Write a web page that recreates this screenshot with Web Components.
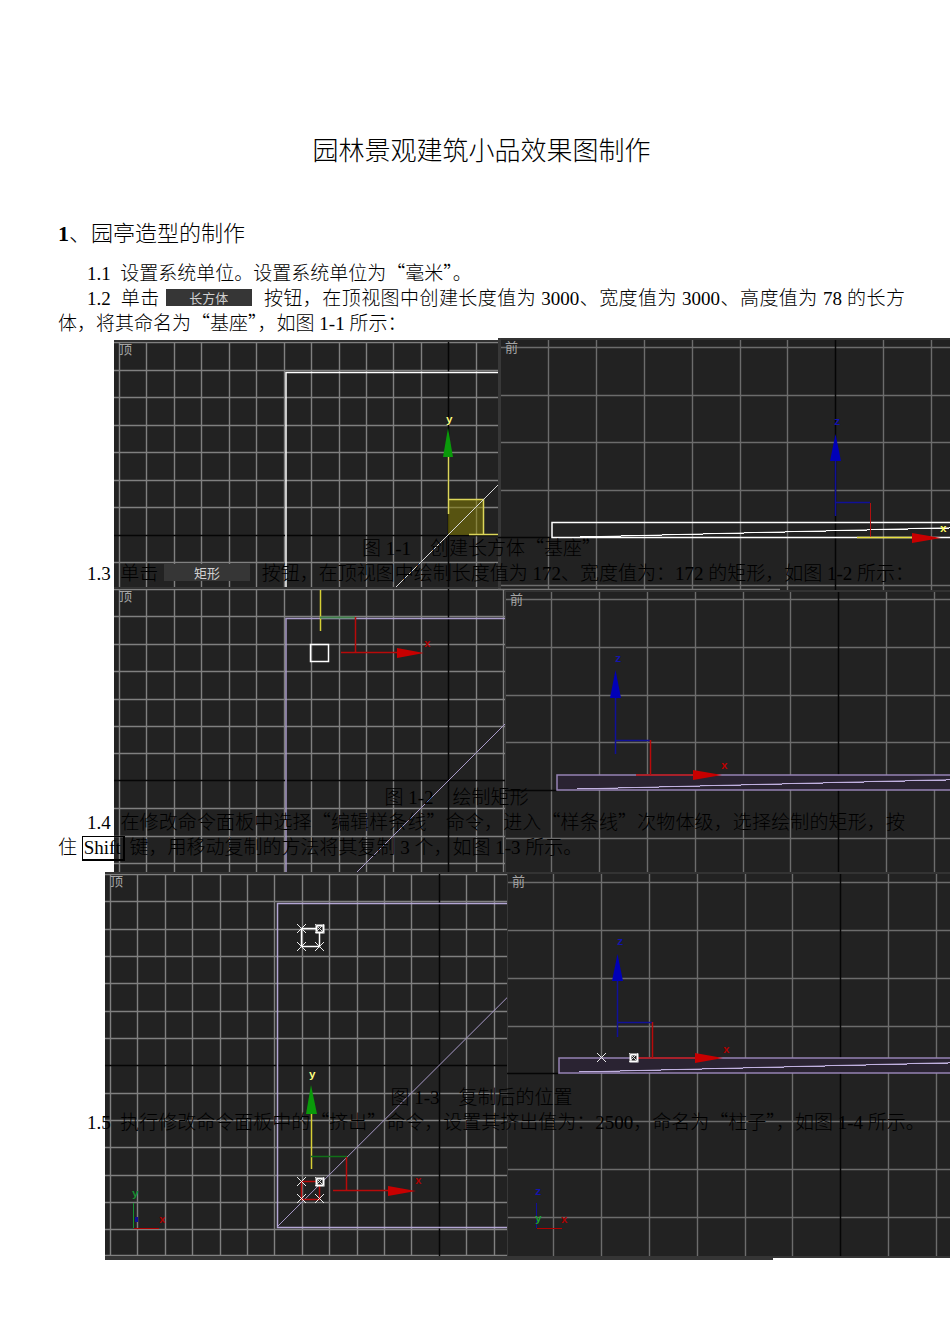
<!DOCTYPE html>
<html lang="zh-CN">
<head>
<meta charset="utf-8">
<title>园林景观建筑小品效果图制作</title>
<style>
html, body { margin: 0; background: #fff; color: #000; }
body { font: 19px/25px "Liberation Serif", "Noto Sans CJK SC", serif; font-weight: 300; }
</style>
</head>
<body>
<tutorial-page></tutorial-page>

<script>
const range = (start, step, end) => {
  const out = [];
  for (let v = start; v < end; v += step) out.push(Math.round(v));
  return out;
};
const cross = (x, y, c = '#eee') => `<path d="M${x - 4} ${y - 4}l9 9m0-9l-9 9" stroke="${c}"/>`;
const boxed = (x, y) => `<rect x="${x - 3}.5" y="${y - 3}.5" width="7" height="7" fill="#222" stroke="#fff" stroke-width="2"/><path d="M${x - 4} ${y - 4}l9 9m0-9l-9 9" stroke="#ddd"/>`;
const label = (x, y, t, c) => `<text x="${x}" y="${y}" fill="${c}" class="axis">${t}</text>`;
const slope = (x, y, c) => `<path d="M${x} ${y}l41 0m0-1l41 0m0-1l41 0m0-1l41 0m0-1l41 0m0-1l41 0m0-1l41 0m0-1l41 0m0-1l41 0m0-1l41 0" stroke="${c}"/><path d="M${x + 20} ${y}L${x + 370} ${y - 9}" stroke="${c}" opacity=".6"/>`;

/* Each scene uses the coordinates of the sheet; x and y give its top left corner. */
const SCENES = {
  top1: { x: 114, y: 340, w: 384, h: 247, label: '顶', lx: 119, ly: 354,
    cols: range(119, 27.45, 2000), rows: range(342, 27.5, 587), axisX: 448, axisY: 535, grid: '#808080',
    draw: `<path d="M286 600V372.5H2400" stroke="#fff" stroke-width="1.5"/>
      <rect x="448" y="499" width="36" height="36" fill="#8c8400" opacity=".5"/>
      <path d="M448.500 499.500H483.500V534M448.500 457V514M469 534.500H498" stroke="#dcd65a" stroke-width="1.5"/>
      <path d="M396 587L598 385" stroke="#d8d8d8"/>
      <path d="M448 428L453 457H443Z" fill="#0a9a0a" stroke="none"/>` + label(446, 423, 'y', '#ffff80') },
  front1: { x: 498, y: 338, w: 452, h: 252, label: '前', lx: 505, ly: 352, edge: 3,
    cols: range(548, 47.9, 2400), rows: range(347, 47.6, 588), axisX: 835, axisY: 537, axisEnd: 552, grid: '#6c6c6c',
    draw: `<path d="M2400 537.500H552V522.500H2400" stroke="#fff" stroke-width="1.5"/>` + slope(580, 536.5, '#fff') +
      `<path d="M498 589.500H780" stroke="#777" stroke-width="1.5"/>
      <path d="M835.500 458V516M835.500 502.500H870" stroke="#101098" stroke-width="1.500"/>
      <path d="M835.500 434L841 461H830Z" fill="#0000b8" stroke="none"/>
      <path d="M870.500 503V537" stroke="#b01010"/><path d="M857 537.500H912" stroke="#e8e040" stroke-width="1.500"/>
      <path d="M941 538L912 543V533Z" fill="#c80000" stroke="none"/>` + label(834, 425, 'z', '#1414b0') + label(940, 532, 'x', '#ffff60') },
  top2: { x: 114, y: 587, w: 391, h: 285, label: '顶', lx: 119, ly: 601,
    cols: range(119, 27.45, 2000), rows: range(589, 27.4, 872), axisX: 448, axisY: 780, grid: '#808080',
    draw: `<path d="M286 872V618.500H2400" stroke="#a99bc9" stroke-width="1.500"/><path d="M357 872L605 624" stroke="#a99bc9"/>
      <path d="M320.500 590V631" stroke="#d6cf35" stroke-width="1.500"/><path d="M320 617.500H355" stroke="#40804a" stroke-width="2"/>
      <path d="M355.500 617V652.500M341 652.500H398" stroke="#b80a0a" stroke-width="1.5"/><path d="M424 653L397 658V648Z" fill="#c80000" stroke="none"/>
      <rect x="310.500" y="644.500" width="18" height="17" stroke="#fff" stroke-width="1.500"/>` + label(424, 647, 'x', '#b00000') },
  front2: { x: 505, y: 590, w: 445, h: 282, label: '前', lx: 510, ly: 604, edge: 1,
    cols: range(551, 47.9, 2400), rows: range(599, 47.75, 872), axisX: 838, axisY: 790, axisEnd: 557, grid: '#6c6c6c',
    draw: `<path d="M2400 790H557V775H2400Z" fill="#2a2332" stroke="#9583b4" stroke-width="1.500"/>` + slope(577, 788.5, '#c0b0df') +
      `<path d="M615.500 696V754M615.500 740.500H650" stroke="#101098" stroke-width="1.500"/>
      <path d="M615.500 670L621 698H610Z" fill="#0000b8" stroke="none"/>
      <path d="M650.500 740V775M636 775H694" stroke="#b80a0a" stroke-width="1.5"/>
      <path d="M722 775L693 780V770Z" fill="#c80000" stroke="none"/>` + label(615, 662, 'z', '#1414b0') + label(721, 769, 'x', '#c00000') },
  top3: { x: 105, y: 872, w: 402, h: 388, label: '顶', lx: 110, ly: 886, floor: 1256,
    cols: range(110, 27.4, 2000), rows: range(874, 27.33, 1240).concat(1255), axisX: 439, axisY: 1065, grid: '#808080',
    draw: `<path d="M2400 903.500H277.500V1227.500H2400" stroke="#b3a6d4" stroke-width="1.500"/><path d="M277 1227L607 898" stroke="#a99bc9"/>
      <rect x="301.500" y="928.500" width="18" height="18" stroke="#fff" stroke-width="1.500"/>
      <path d="M311.500 1112V1169" stroke="#d6cf35" stroke-width="1.500"/><path d="M311 1085L317 1114H306Z" fill="#0a9a0a" stroke="none"/>
      <path d="M311 1156.500H347" stroke="#107018" stroke-width="1.5"/><path d="M346.500 1157V1190M333 1190.500H390M301.500 1181.500H319.500V1199.500H301.500Z" stroke="#b80a0a" stroke-width="1.5"/>
      <path d="M416 1191L388 1196V1186Z" fill="#c80000" stroke="none"/>` +
      cross(301, 928) + cross(301, 946) + cross(319, 946) + boxed(319, 928) +
      cross(301, 1181) + cross(301, 1198) + cross(319, 1198) + boxed(319, 1181) +
      `<path d="M133.500 1203V1228" stroke="#159030"/><path d="M134 1228.500H159" stroke="#b00000"/><rect x="135" y="1217" width="3" height="5" fill="#101098" stroke="none"/>` +
      label(309, 1078, 'y', '#ffff80') + label(415, 1184, 'x', '#b00000') + label(132, 1197, 'y', '#159030') + label(159, 1223, 'x', '#b00000') },
  front3: { x: 507, y: 872, w: 443, h: 388, label: '前', lx: 512, ly: 886, edge: 1, floor: 1256,
    cols: range(553, 47.9, 2400), rows: range(882, 47.85, 1240), axisX: 840, axisY: 1073, axisEnd: 558, grid: '#6c6c6c',
    draw: `<path d="M2400 1073H559V1058H2400Z" fill="#2a2332" stroke="#9583b4" stroke-width="1.500"/>` + slope(579, 1071.5, '#c0b0df') +
      `<path d="M617.500 980V1037M617.500 1022.500H652" stroke="#101098" stroke-width="1.500"/>
      <path d="M617.500 954L623 981H612Z" fill="#0000b8" stroke="none"/>
      <path d="M652.500 1022V1058M638 1058H696" stroke="#b80a0a" stroke-width="1.5"/>
      <path d="M723 1058L695 1063V1053Z" fill="#c80000" stroke="none"/>` + cross(601, 1057) + boxed(633, 1057) +
      `<path d="M536.500 1203V1228" stroke="#101098"/><path d="M537 1228.500H562" stroke="#b00000"/>
      <rect x="773" y="1258" width="1627" height="2" fill="#ffffff" stroke="none"/>` +
      label(617, 945, 'z', '#1414b0') + label(723, 1053, 'x', '#b00000') + label(535, 1195, 'z', '#1414b0') + label(535, 1222, 'y', '#20a030') + label(561, 1223, 'x', '#b00000') },
};

class ModelViewport extends HTMLElement {
  connectedCallback() {
    const s = SCENES[this.getAttribute('scene')];
    const end = s.floor || s.y + s.h;
    const v = s.cols.filter(x => Math.abs(x - s.axisX) > 3).map(x => `M${x}.5 ${s.y + 2}V${end}`).join('');
    const h = s.rows.filter(y => Math.abs(y - s.axisY) > 3).map(y => `M${s.x + (s.edge || 0)} ${y}.5H2400`).join('');
    this.attachShadow({ mode: 'open' }).innerHTML = `
      <style>
        :host { display: block; overflow: hidden; min-width: 0; }
        svg { display: block; width: 100%; height: ${s.h}px; background: #222; }
        path, rect { fill: none; }
        text { font: 13px "Noto Sans CJK SC", sans-serif; fill: #a5a5a5; }
        .axis { font: bold 11px "Liberation Mono", monospace; }
      </style>
      <svg role="img" aria-label="${s.label}视图"><g transform="translate(${-s.x} ${-s.y})">
        <path d="${v}${h}" stroke="${s.grid}" stroke-width="1.4"/>
        <path d="M${s.x} ${s.y}.5H2400" stroke="#333" stroke-width="3"/>
        ${s.edge ? `<path d="M${s.x + s.edge / 2} ${s.y}V${end}" stroke="#383838" stroke-width="${s.edge}"/>` : ''}
        <path d="M${s.axisX}.5 ${s.y + 2}V${end}" stroke="#050505" stroke-width="1.5"/>
        <path d="M${s.x} ${s.axisY}.5H${s.axisEnd || 2400}" stroke="#050505" stroke-width="1.5"/>
        ${s.floor ? `<path d="M${s.x} ${s.floor + 2}H2400" stroke="#353535" stroke-width="4"/>` : ''}
        <g>${s.draw.replace(/fill="(#[0-9a-f]+)"/g, 'style="fill:$1"')}</g>
        <text x="${s.lx}" y="${s.ly}">${s.label}</text>
      </g></svg>`;
  }
}
customElements.define('model-viewport', ModelViewport);

class FigurePair extends HTMLElement {
  connectedCallback() {
    this.attachShadow({ mode: 'open' }).innerHTML = `
      <style>
        :host { display: grid; grid-template-columns: var(--split) minmax(0, 1fr); align-items: start; }
      </style><slot></slot>`;
  }
}
customElements.define('figure-pair', FigurePair);

class CommandButton extends HTMLElement {
  connectedCallback() {
    this.attachShadow({ mode: 'open' }).innerHTML = `
      <style>
        :host { display: inline-block; vertical-align: 2px; margin: 0 7px 0 1px; line-height: 0; text-indent: 0; }
        button { display: block; width: 86px; height: 17px; margin: 0; padding: 0; border: 0; background: #363636; color: #d0d0d0;
          font: 13px/17px "Noto Sans CJK SC", sans-serif; }
      </style><button type="button"><slot></slot></button>`;
  }
}
customElements.define('command-button', CommandButton);

class KeyCap extends HTMLElement {
  connectedCallback() {
    this.attachShadow({ mode: 'open' }).innerHTML = `
      <style>
        :host { display: inline-block; line-height: 22px; text-indent: 0; }
        kbd { display: block; font: inherit; padding: 0 2px 0 1px; border: 1px solid #000; border-bottom-width: 2px; border-right-width: 2px; }
      </style><kbd><slot></slot></kbd>`;
  }
}
customElements.define('key-cap', KeyCap);

class TutorialPage extends HTMLElement {
  connectedCallback() {
    this.attachShadow({ mode: 'open' }).innerHTML = `
      <style>
        :host { display: block; padding: 134px 0 84px; overflow: hidden; }
        h1, h2, p { margin: 0; font-weight: inherit; }
        h1 { padding: 0 45px 0 58px; font-size: 26px; line-height: 36px; text-align: center; }
        h2 { padding-left: 58px; margin-top: 48px; font-size: 22px; line-height: 32px; }
        b { font-weight: 700; }
        .stage { display: grid; margin-top: 11px; }
        .stage > * { grid-area: 1 / 1; min-width: 0; }
        .figures { padding-top: 77px; }
        .text { position: relative; z-index: 2; padding: 0 45px 0 58px; }
        p { text-indent: 29px; text-align: justify; }
        .single { white-space: nowrap; }
        .caption { text-indent: 0; text-align: center; white-space: pre; margin-top: 200px; }
        .caption.short { padding-right: 50px; margin-top: 199px; }
        .caption.far { margin-top: 224px; }
        i { font-style: normal; font-family: "Noto Sans CJK SC", sans-serif; line-height: 0; }
        figure-pair { position: relative; }
        figure-pair:nth-child(1) { --split: 384px; margin-left: 114px; height: 249px; z-index: 1; }
        figure-pair:nth-child(1) model-viewport:first-child { margin-top: 2px; }
        figure-pair:nth-child(2) { --split: 391px; margin-left: 114px; }
        figure-pair:nth-child(2) model-viewport:last-child { margin-top: 3px; }
        figure-pair:nth-child(3) { --split: 402px; margin-left: 105px; }
      </style>
      <h1>园林景观建筑小品效果图制作</h1>
      <h2><b>1</b>、园亭造型的制作</h2>
      <div class="stage">
        <div class="figures">
          <figure-pair><model-viewport scene="top1"></model-viewport><model-viewport scene="front1"></model-viewport></figure-pair>
          <figure-pair><model-viewport scene="top2"></model-viewport><model-viewport scene="front2"></model-viewport></figure-pair>
          <figure-pair><model-viewport scene="top3"></model-viewport><model-viewport scene="front3"></model-viewport></figure-pair>
        </div>
        <div class="text">
          <p>1.1&ensp;设置系统单位。设置系统单位为<i>“</i>毫米<i>”。</i></p>
          <p>1.2&ensp;单击 <command-button>长方体</command-button> 按钮，在顶视图中创建长度值为 3000、宽度值为 3000、高度值为 78 的长方体，将其命名为<i>“</i>基座<i>”，</i>如图 1-1 所示：</p>
          <p class="caption">图 1-1　创建长方体<i>“</i>基座<i>”</i></p>
          <p class="single">1.3&ensp;单击 <command-button>矩形</command-button> 按钮，在顶视图中绘制长度值为 172、宽度值为：172 的矩形，如图 1-2 所示：</p>
          <p class="caption short">图 1-2　绘制矩形</p>
          <p>1.4&ensp;在修改命令面板中选择<i>“</i>编辑样条线<i>”</i>命令，进入<i>“</i>样条线<i>”</i>次物体级，选择绘制的矩形，按住 <key-cap>Shift</key-cap> 键，用移动复制的方法将其复制 3 个，如图 1-3 所示。</p>
          <p class="caption far">图 1-3　复制后的位置</p>
          <p class="single">1.5&ensp;执行修改命令面板中的<i>“</i>挤出<i>”</i>命令，设置其挤出值为：2500，命名为<i>“</i>柱子<i>”，</i>如图 1-4 所示。</p>
        </div>
      </div>`;
  }
}
customElements.define('tutorial-page', TutorialPage);
</script>
</body>
</html>
